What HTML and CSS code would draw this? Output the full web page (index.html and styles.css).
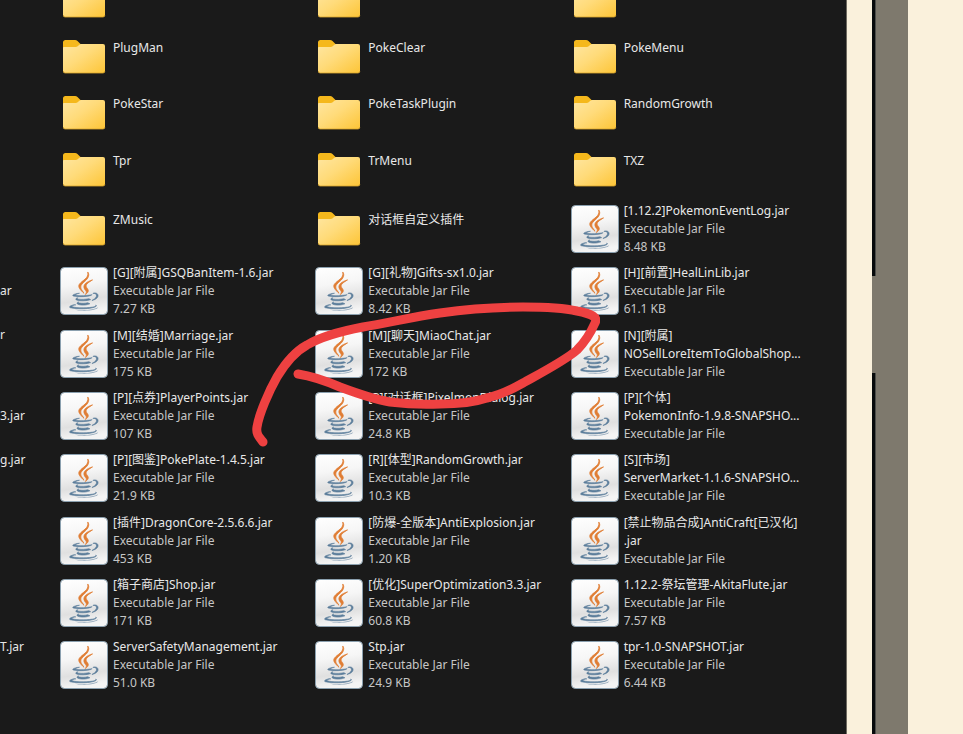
FILE: index.html
```html
<!DOCTYPE html>
<html lang="zh-CN">
<head>
<meta charset="utf-8">
<title>plugins</title>
<link rel="stylesheet" href="styles.css">
</head>
<body>
<svg class="defs" aria-hidden="true">
  <defs>
    <linearGradient id="folder-face" x1="0" y1="0" x2="1" y2="1">
      <stop offset="0" stop-color="#ffe6a0"/>
      <stop offset="0.45" stop-color="#ffdb7a"/>
      <stop offset="1" stop-color="#fdc537"/>
    </linearGradient>
    <linearGradient id="tile-face" x1="0" y1="0" x2="0.15" y2="1">
      <stop offset="0" stop-color="#ffffff"/>
      <stop offset="0.4" stop-color="#f6f6f6"/>
      <stop offset="0.75" stop-color="#e0e0e0"/>
      <stop offset="1" stop-color="#f4f4f4"/>
    </linearGradient>
    <symbol id="folder" viewBox="0 0 48 48">
      <path fill="#f5b81c" d="M3 9.500Q3 7 5.500 7H15Q16.500 7 17.500 8L20.500 11H40V20H3Z"/>
      <path fill="url(#folder-face)" d="M3 14.500Q3 14 4 14H15.500Q17 14 18 13L19 12Q20 11 21.500 11H43Q45 11 45 13V38Q45 40 43 40H5Q3 40 3 38Z"/>
      <path fill="none" stroke="#d9a52c" stroke-width="0.800" d="M3.400 38Q3.400 40 5 40H43Q44.800 40 44.800 38"/>
    </symbol>
    <symbol id="jar" viewBox="0 0 48 48">
      <rect x="0.500" y="0.500" width="47" height="47" rx="4" fill="url(#tile-face)" stroke="#8ba0af"/>
      <g transform="translate(4 4.500) scale(0.310)">
        <g fill="#5b7d9b" stroke="#5b7d9b" stroke-width="2">
          <path d="M47.617 98.120s-4.767 2.774 3.397 3.710c9.892 1.130 14.947.968 25.845-1.092 0 0 2.871 1.795 6.873 3.351-24.439 10.470-55.308-.607-36.115-5.969zm-2.988-13.665s-5.348 3.959 2.823 4.805c10.567 1.091 18.910 1.180 33.354-1.600 0 0 1.993 2.025 5.132 3.131-29.542 8.640-62.446.680-41.309-6.336z"/>
          <path d="M102.123 108.229s3.529 2.910-3.888 5.159c-14.102 4.272-58.706 5.560-71.094.171-4.451-1.938 3.899-4.625 6.526-5.192 2.739-.593 4.303-.485 4.303-.485-4.953-3.487-32.013 6.850-13.743 9.815 49.821 8.076 90.817-3.637 77.896-9.468zM49.912 70.294s-22.686 5.389-8.033 7.348c6.188.828 18.518.638 30.011-.326 9.390-.789 18.813-2.474 18.813-2.474s-3.308 1.419-5.704 3.053c-23.042 6.061-67.544 3.238-54.731-2.958 10.832-5.239 19.644-4.643 19.644-4.643zm40.697 22.747c23.421-12.167 12.591-23.860 5.032-22.285-1.848.385-2.677.720-2.677.720s.688-1.079 2-1.543c14.953-5.255 26.451 15.503-4.823 23.725 0-.002.359-.327.468-.617z"/>
        </g>
        <g fill="#e07d34" stroke="#e07d34" stroke-width="2.500">
          <path d="M69.802 61.271c6.025 6.935-1.580 13.170-1.580 13.170s15.289-7.891 8.269-17.777c-6.559-9.215-11.587-13.792 15.635-29.580 0 .001-42.731 10.670-22.324 34.187z"/>
          <path d="M76.491 1.587S89.459 14.563 64.188 34.510c-20.266 16.006-4.621 25.130-.007 35.559-11.831-10.673-20.509-20.070-14.688-28.815C58.041 28.420 81.722 22.195 76.491 1.587z"/>
        </g>
        <path fill="#8fa5b8" d="M52.214 126.021c22.476 1.437 57-.800 57.817-11.436 0 0-1.571 4.032-18.577 7.231-19.186 3.612-42.854 3.191-56.887.874 0 .001 2.875 2.381 17.647 3.331z"/>
      </g>
    </symbol>
  </defs>
</svg>

<div class="desktop">
  <main class="explorer">
    <ul class="files">
      <li class="cut"></li>
      <li class="file"><svg class="icon"><use href="#folder"/></svg></li>
      <li class="file"><svg class="icon"><use href="#folder"/></svg></li>
      <li class="file"><svg class="icon"><use href="#folder"/></svg></li>

      <li class="cut"></li>
      <li class="file"><svg class="icon"><use href="#folder"/></svg><div class="label folder-label"><p class="name">PlugMan</p></div></li>
      <li class="file"><svg class="icon"><use href="#folder"/></svg><div class="label folder-label"><p class="name">PokeClear</p></div></li>
      <li class="file"><svg class="icon"><use href="#folder"/></svg><div class="label folder-label"><p class="name">PokeMenu</p></div></li>

      <li class="cut"></li>
      <li class="file"><svg class="icon"><use href="#folder"/></svg><div class="label folder-label"><p class="name">PokeStar</p></div></li>
      <li class="file"><svg class="icon"><use href="#folder"/></svg><div class="label folder-label"><p class="name">PokeTaskPlugin</p></div></li>
      <li class="file"><svg class="icon"><use href="#folder"/></svg><div class="label folder-label"><p class="name">RandomGrowth</p></div></li>

      <li class="cut"></li>
      <li class="file"><svg class="icon"><use href="#folder"/></svg><div class="label folder-label"><p class="name">Tpr</p></div></li>
      <li class="file"><svg class="icon"><use href="#folder"/></svg><div class="label folder-label"><p class="name">TrMenu</p></div></li>
      <li class="file"><svg class="icon"><use href="#folder"/></svg><div class="label folder-label"><p class="name">TXZ</p></div></li>

      <li class="cut"></li>
      <li class="file"><svg class="icon"><use href="#folder"/></svg><div class="label folder-label"><p class="name">ZMusic</p></div></li>
      <li class="file"><svg class="icon"><use href="#folder"/></svg><div class="label folder-label"><p class="name">对话框自定义插件</p></div></li>
      <li class="file"><svg class="icon"><use href="#jar"/></svg><div class="label"><p class="name">[1.12.2]PokemonEventLog.jar</p><p>Executable Jar File</p><p>8.48 KB</p></div></li>

      <li class="cut second-line">ar</li>
      <li class="file"><svg class="icon"><use href="#jar"/></svg><div class="label"><p class="name">[G][附属]GSQBanItem-1.6.jar</p><p>Executable Jar File</p><p>7.27 KB</p></div></li>
      <li class="file"><svg class="icon"><use href="#jar"/></svg><div class="label"><p class="name">[G][礼物]Gifts-sx1.0.jar</p><p>Executable Jar File</p><p>8.42 KB</p></div></li>
      <li class="file"><svg class="icon"><use href="#jar"/></svg><div class="label"><p class="name">[H][前置]HealLinLib.jar</p><p>Executable Jar File</p><p>61.1 KB</p></div></li>

      <li class="cut">r</li>
      <li class="file"><svg class="icon"><use href="#jar"/></svg><div class="label"><p class="name">[M][结婚]Marriage.jar</p><p>Executable Jar File</p><p>175 KB</p></div></li>
      <li class="file"><svg class="icon"><use href="#jar"/></svg><div class="label"><p class="name">[M][聊天]MiaoChat.jar</p><p>Executable Jar File</p><p>172 KB</p></div></li>
      <li class="file"><svg class="icon"><use href="#jar"/></svg><div class="label"><p class="name">[N][附属]<br>NOSellLoreItemToGlobalShop...</p><p>Executable Jar File</p></div></li>

      <li class="cut second-line">3.jar</li>
      <li class="file"><svg class="icon"><use href="#jar"/></svg><div class="label"><p class="name">[P][点券]PlayerPoints.jar</p><p>Executable Jar File</p><p>107 KB</p></div></li>
      <li class="file"><svg class="icon"><use href="#jar"/></svg><div class="label"><p class="name">[P][对话框]PixelmonDialog.jar</p><p>Executable Jar File</p><p>24.8 KB</p></div></li>
      <li class="file"><svg class="icon"><use href="#jar"/></svg><div class="label"><p class="name">[P][个体]<br>PokemonInfo-1.9.8-SNAPSHO...</p><p>Executable Jar File</p></div></li>

      <li class="cut">g.jar</li>
      <li class="file"><svg class="icon"><use href="#jar"/></svg><div class="label"><p class="name">[P][图鉴]PokePlate-1.4.5.jar</p><p>Executable Jar File</p><p>21.9 KB</p></div></li>
      <li class="file"><svg class="icon"><use href="#jar"/></svg><div class="label"><p class="name">[R][体型]RandomGrowth.jar</p><p>Executable Jar File</p><p>10.3 KB</p></div></li>
      <li class="file"><svg class="icon"><use href="#jar"/></svg><div class="label"><p class="name">[S][市场]<br>ServerMarket-1.1.6-SNAPSHO...</p><p>Executable Jar File</p></div></li>

      <li class="cut"></li>
      <li class="file"><svg class="icon"><use href="#jar"/></svg><div class="label"><p class="name">[插件]DragonCore-2.5.6.6.jar</p><p>Executable Jar File</p><p>453 KB</p></div></li>
      <li class="file"><svg class="icon"><use href="#jar"/></svg><div class="label"><p class="name">[防爆-全版本]AntiExplosion.jar</p><p>Executable Jar File</p><p>1.20 KB</p></div></li>
      <li class="file"><svg class="icon"><use href="#jar"/></svg><div class="label"><p class="name">[禁止物品合成]AntiCraft[已汉化]<br>.jar</p><p>Executable Jar File</p></div></li>

      <li class="cut"></li>
      <li class="file"><svg class="icon"><use href="#jar"/></svg><div class="label"><p class="name">[箱子商店]Shop.jar</p><p>Executable Jar File</p><p>171 KB</p></div></li>
      <li class="file"><svg class="icon"><use href="#jar"/></svg><div class="label"><p class="name">[优化]SuperOptimization3.3.jar</p><p>Executable Jar File</p><p>60.8 KB</p></div></li>
      <li class="file"><svg class="icon"><use href="#jar"/></svg><div class="label"><p class="name">1.12.2-祭坛管理-AkitaFlute.jar</p><p>Executable Jar File</p><p>7.57 KB</p></div></li>

      <li class="cut">T.jar</li>
      <li class="file"><svg class="icon"><use href="#jar"/></svg><div class="label"><p class="name">ServerSafetyManagement.jar</p><p>Executable Jar File</p><p>51.0 KB</p></div></li>
      <li class="file"><svg class="icon"><use href="#jar"/></svg><div class="label"><p class="name">Stp.jar</p><p>Executable Jar File</p><p>24.9 KB</p></div></li>
      <li class="file"><svg class="icon"><use href="#jar"/></svg><div class="label"><p class="name">tpr-1.0-SNAPSHOT.jar</p><p>Executable Jar File</p><p>6.44 KB</p></div></li>
    </ul>
    <svg class="marker" viewBox="0 0 360 150" aria-hidden="true">
      <path d="M23 142C18 136 16 133 17 127C19 114 29 91 37 77C46 62 56 51 67 45C82 36 102 31 123 27C148 23 172 17 200 13C228 9 256 7 283 7C306 7 324 8 337 11C352 14 358 17 355 23C351 32 344 43 337 50C326 60 301 73 283 83C269 91 260 95 247 98C232 103 216 104 200 104C182 105 166 104 150 102C133 99 116 93 100 87C86 81 71 76 58 74"/>
    </svg>
  </main>
  <div class="gutter"></div>
  <div class="divider">
    <span class="edge edge-top"></span>
    <span class="edge-gap"></span>
    <span class="edge edge-bottom"></span>
  </div>
  <div class="margin"></div>
</div>
</body>
</html>
```
FILE: styles.css
```css
* {
  box-sizing: border-box;
}

body {
  margin: 0;
  background: #faf1dc;
  font-family: "Noto Sans", "Noto Sans CJK SC", sans-serif;
  font-size: 12px;
  line-height: 18px;
  color: #c6c6c6;
}

.defs {
  position: absolute;
  width: 0;
  height: 0;
}

.desktop {
  display: flex;
  min-height: 100vh;
}

.explorer {
  position: relative;
  flex: 1;
  min-width: 0;
  overflow: hidden;
  padding-right: 20px;
  background: #1a1a1a;
  border-right: 1px solid #6e6a60;
}

.files {
  display: grid;
  grid-template-columns: 60px repeat(3, 1fr);
  grid-template-rows: repeat(3, 56px) 57px repeat(2, 62px 62px 63px) 62px 62px;
  margin: -27px 0 0;
  padding: 0;
  list-style: none;
}

.file {
  display: flex;
  align-items: center;
  gap: 5px;
  min-width: 0;
}

.icon {
  flex: none;
  width: 48px;
  height: 48px;
}

.label {
  min-width: 0;
  white-space: nowrap;
}

.folder-label {
  min-height: 36px;
}

p {
  margin: 0;
}

.name,
.cut {
  color: #e8e8e8;
}

.cut {
  padding-top: 4px;
}

.second-line {
  padding-top: 22px;
}

.marker {
  position: absolute;
  left: 240px;
  top: 300px;
  width: 360px;
  height: 150px;
  fill: none;
  stroke: #ee4141;
  stroke-width: 9;
  stroke-linecap: round;
  stroke-linejoin: round;
}

.gutter {
  width: 25px;
}

.divider {
  display: flex;
  flex-direction: column;
  width: 36px;
  background: #7e796d;
}

.edge {
  width: 4px;
  background: #070a0b;
  border-right: 1px solid #4c4d49;
}

.edge-top {
  flex: 276;
}

.edge-gap {
  flex: 97;
}

.edge-bottom {
  flex: 361;
}

.margin {
  width: 55px;
}
```
